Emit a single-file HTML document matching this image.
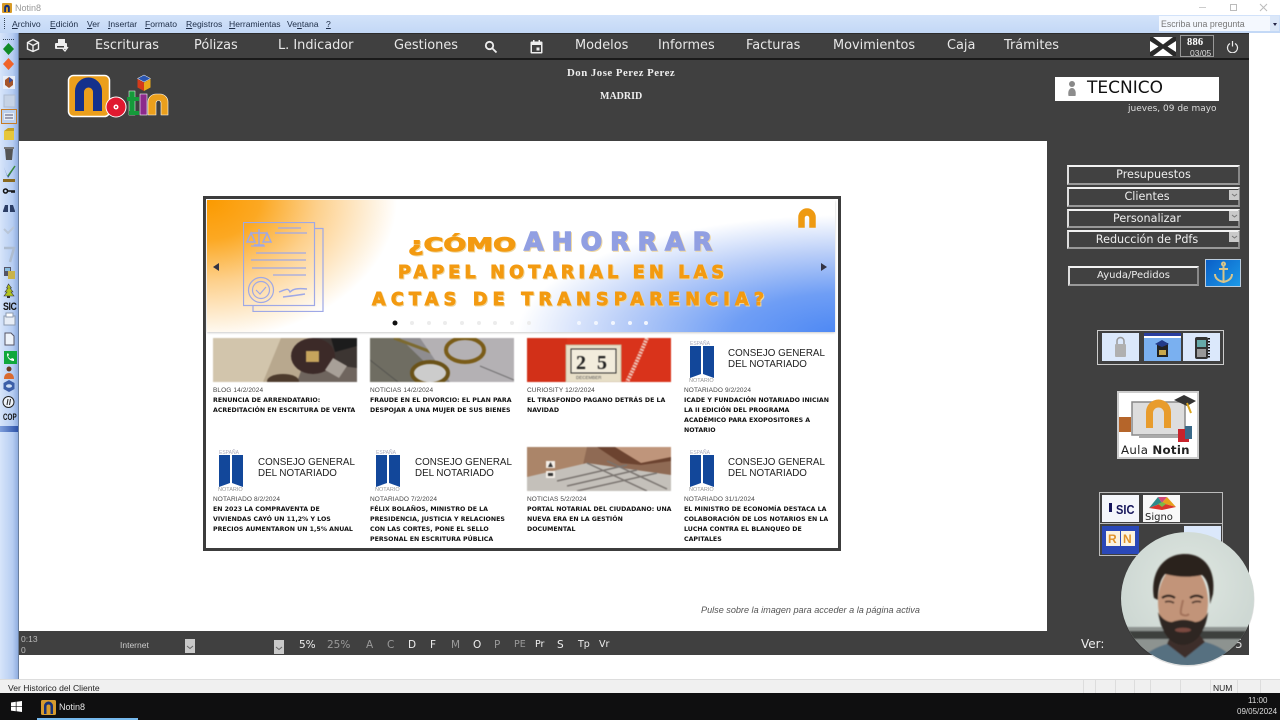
<!DOCTYPE html>
<html><head><meta charset="utf-8"><title>Notin8</title>
<style>
html,body{margin:0;padding:0;width:1280px;height:720px;overflow:hidden;background:#fff;font-family:"DejaVu Sans","Liberation Sans",sans-serif}
.a{position:absolute}
.t{position:absolute;white-space:nowrap;line-height:1}
.m{font:8.6px/10px "Liberation Sans",sans-serif;color:#20304a;top:19px;position:absolute;white-space:nowrap}
.m u{text-decoration:underline}
.n{position:absolute;top:39px;font:12.9px/14px "DejaVu Sans",sans-serif;color:#e8e8e8;white-space:nowrap}
.b{position:absolute;box-sizing:border-box;background:#414141;border:2px solid;border-color:#f2f2f2 #888 #999 #ddd;color:#eee;text-align:center;font:11.2px/16px "DejaVu Sans",sans-serif}
.dd{position:absolute;width:10px;height:10px;background:#c9c9c9;left:1229px}
.f{position:absolute;top:639px;font:10.5px/12px "DejaVu Sans",sans-serif;color:#eee}
.g{color:#9a9a9a}
.card{position:absolute;width:150px;font:6.25px/10px "DejaVu Sans",sans-serif;color:#111;white-space:nowrap}
.card i{display:block;font:6.5px/10px "Liberation Sans",sans-serif;color:#444;letter-spacing:.1px}
.card b{display:block;font-weight:bold}
.tile{position:absolute;box-sizing:border-box;background:#dbe8fb}
.cg{font:9.8px/11px 'Liberation Sans',sans-serif;color:#222}
</style></head><body>
<!-- title bar -->
<div class="a" style="left:0;top:0;width:1280px;height:15px;background:#fff"></div>
<svg class="a" style="left:2px;top:3px" width="10" height="10"><rect width="10" height="10" rx="1" fill="#d79a26"/><path d="M2.2 9V4.5a2.8 2.8 0 0 1 5.6 0V9H6V5a1 1 0 0 0-2 0v4z" fill="#14307a"/></svg>
<div class="t" style="left:15px;top:3px;font:9px 'Liberation Sans',sans-serif;color:#999">Notin8</div>
<div class="a" style="left:1199px;top:7px;width:7px;height:1px;background:#ccc"></div>
<div class="a" style="left:1230px;top:4px;width:5px;height:5px;border:1px solid #bbb"></div>
<svg class="a" style="left:1259px;top:3px" width="9" height="9"><path d="M1 1l7 7M8 1l-7 7" stroke="#bbb" fill="none"/></svg>
<!-- menu bar -->
<div class="a" style="left:0;top:15px;width:1280px;height:18px;background:linear-gradient(#d3e3fa,#c3d8f6)"></div>
<div class="a" style="left:4px;top:18px;width:1px;height:11px;border-left:1px dotted #345"></div>
<div class="m" style="left:12px"><u>A</u>rchivo</div>
<div class="m" style="left:50px"><u>E</u>dición</div>
<div class="m" style="left:87px"><u>V</u>er</div>
<div class="m" style="left:108px"><u>I</u>nsertar</div>
<div class="m" style="left:145px"><u>F</u>ormato</div>
<div class="m" style="left:186px"><u>R</u>egistros</div>
<div class="m" style="left:229px"><u>H</u>erramientas</div>
<div class="m" style="left:287px">Ve<u>n</u>tana</div>
<div class="m" style="left:326px"><u>?</u></div>
<div class="a" style="left:1159px;top:16px;width:111px;height:15px;background:#f4f8fe"></div>
<div class="t" style="left:1161px;top:19px;font:8.8px 'Liberation Sans',sans-serif;color:#777">Escriba una pregunta</div>
<div class="a" style="left:1270px;top:16px;width:9px;height:15px;background:#dbe7f8"></div>
<div class="a" style="left:1273px;top:23px;border:2px solid transparent;border-top:3px solid #224"></div>
<!-- left toolbar -->
<div class="a" style="left:0;top:33px;width:18px;height:646px;background:linear-gradient(90deg,#d7e5fa,#b6cdf2 70%,#91aee0)"></div>
<div class="a" style="left:18px;top:33px;width:1px;height:646px;background:#6a7f9f"></div>
<svg class="a" style="left:0;top:33px" width="18" height="402">
<path d="M3 6.500h12" stroke="#345" stroke-dasharray="1 1"/>
<path d="M8.500 10l5.500 6-5.500 6-5.500-6z" fill="#0f8a26"/>
<path d="M8.500 25l5.500 6-5.500 6-5.500-6z" fill="#f0632a"/>
<rect x="3" y="43" width="12" height="13" fill="#e8eef8"/><path d="M5 47l4-3 4 3v5l-4 3-4-3z" fill="#a5552a"/><path d="M9 44l4 3-4 3z" fill="#3a4f9a"/>
<rect x="4" y="62" width="11" height="12" fill="#c6d3e6" stroke="#aebbd0"/>
<rect x="1.500" y="76.500" width="15" height="14" fill="#bcd0ee" stroke="#c57c28"/><rect x="4" y="80" width="10" height="7" fill="#e6edf6"/><path d="M5 82h8M5 85h8" stroke="#557"/>
<path d="M4 98h10v9H4z" fill="#e6c63a"/><path d="M4 98l4-3h6v3z" fill="#c4a020"/>
<path d="M5 116h8l-1 11H6z" fill="#555"/><path d="M4 114h10v2H4z" fill="#777"/>
<path d="M3 146h12v3H3z" fill="#8a6a20"/><path d="M4 134l3 9 8-9-7 11z" fill="#2a4e9a"/><path d="M8 143l7-10" stroke="#3a8a3a" stroke-width="1.500"/>
<circle cx="5.500" cy="158" r="2" fill="none" stroke="#111" stroke-width="1.500"/><path d="M7 158h8M12 158v2M14 158v2" stroke="#111" stroke-width="1.500"/>
<path d="M3 178l2-6h3v7H3zM10 172h3l2 6v1h-5z" fill="#2c3e66"/>
<path d="M4 196l4 4 6-6" stroke="#b9c6d8" fill="none" stroke-width="2"/>
<path d="M4 215h10l-4 14" stroke="#aebccf" fill="none" stroke-width="2.500"/>
<rect x="4" y="234" width="7" height="9" fill="#556"/><rect x="8" y="238" width="7" height="8" fill="#c9b34a"/><rect x="5" y="235" width="5" height="3" fill="#8bd"/>
<path d="M8.500 251l3 4h-1.500l3 4h-2l3 4H4l3-4H5l3-4H6.500z" fill="#b3c41e" stroke="#334" stroke-width=".6"/><path d="M7 263h3v2H7z" fill="#333"/>
<rect x="4" y="283" width="11" height="9" fill="#e7edf6" stroke="#8d9bb0"/><rect x="6" y="280" width="7" height="4" fill="#fff" stroke="#8d9bb0"/>
<path d="M5 300h6l3 3v9H5z" fill="#eef3fa" stroke="#556"/>
<rect x="4" y="318" width="13" height="13" fill="#10a83c"/><path d="M7 321c0 4 3 7 7 7l0-2-2-1-1 1c-1 0-3-2-3-3l1-1-1-2z" fill="#fff"/>
<circle cx="9" cy="336" r="2.500" fill="#6a3a20"/><path d="M4 346c0-4 2-6 5-6s5 2 5 6z" fill="#d96a30"/>
<path d="M9 347l5.500 3v6L9 359l-5.500-3v-6z" fill="#3d5fa8"/><ellipse cx="9" cy="353" rx="3" ry="1.800" fill="#cfe0f5"/>
<circle cx="8.500" cy="369" r="5.500" fill="#eef3fa" stroke="#222"/><path d="M8 366l-1 6M10.500 366l-1 6" stroke="#222"/>
</svg>
<div class="t" style="left:3px;top:301px;font:bold 11px 'Liberation Sans',sans-serif;color:#111;letter-spacing:-.5px;transform:scaleX(.8);transform-origin:left">SIC</div>
<div class="t" style="left:3px;top:412px;font:bold 9px 'Liberation Sans',sans-serif;color:#111;transform:scaleX(.7);transform-origin:left">COP</div>
<div class="a" style="left:0;top:426px;width:18px;height:6px;background:linear-gradient(90deg,#7f9fdc,#2c52a8)"></div>
<!-- dark panels -->
<div class="a" style="left:19px;top:33px;width:1230px;height:108px;background:#404040"></div>
<div class="a" style="left:19px;top:33px;width:1230px;height:1px;background:#2c2c2c"></div>
<div class="a" style="left:19px;top:58px;width:1230px;height:2px;background:#1a1a1a"></div>
<div class="a" style="left:1047px;top:141px;width:202px;height:514px;background:#404040"></div>
<div class="a" style="left:19px;top:631px;width:1230px;height:24px;background:#404040"></div>
<!-- nav -->
<svg class="a" style="left:26px;top:38px" width="14" height="15" fill="none" stroke="#eee" stroke-width="1.400"><path d="M7 1.500l5.500 3v6.500L7 13.500 1.500 11V4.500zM1.500 4.500L7 7.500l5.500-3M7 7.500v6"/></svg>
<svg class="a" style="left:55px;top:39px" width="14" height="13"><rect x="3" y="0" width="7" height="4" fill="#eee"/><rect x="0" y="4" width="12" height="6" rx="1" fill="#eee"/><rect x="2" y="7" width="7" height="1.500" fill="#404040"/><path d="M8 10l2 2 3-4" stroke="#eee" fill="none" stroke-width="1.300"/></svg>
<div class="n" style="left:95px">Escrituras</div>
<div class="n" style="left:194px">Pólizas</div>
<div class="n" style="left:278px">L. Indicador</div>
<div class="n" style="left:394px">Gestiones</div>
<svg class="a" style="left:484px;top:40px" width="14" height="14" fill="none" stroke="#eee" stroke-width="1.800"><circle cx="5.500" cy="5.500" r="3.700"/><path d="M8.500 8.500l4 4"/></svg>
<svg class="a" style="left:530px;top:40px" width="13" height="14"><rect x="0.500" y="1.500" width="12" height="12" rx="1" fill="#eee"/><rect x="2" y="5" width="9" height="7" fill="#404040"/><rect x="3" y="0" width="1.500" height="3" fill="#eee"/><rect x="8.500" y="0" width="1.500" height="3" fill="#eee"/><rect x="6.500" y="7.500" width="3" height="3" fill="#eee"/></svg>
<div class="n" style="left:575px">Modelos</div>
<div class="n" style="left:658px">Informes</div>
<div class="n" style="left:746px">Facturas</div>
<div class="n" style="left:833px">Movimientos</div>
<div class="n" style="left:947px">Caja</div>
<div class="n" style="left:1004px">Trámites</div>
<svg class="a" style="left:1150px;top:37px" width="26" height="19"><rect width="26" height="19" fill="#2a2a2a"/><path d="M3 0h20L13 7.500zM3 19h20L13 11.500zM0 4l8.500 5.500L0 15zM26 4l-8.500 5.500L26 15z" fill="#fff"/></svg>
<div class="a" style="left:1180px;top:35px;width:34px;height:22px;box-sizing:border-box;border:1px solid #999;background:#3a3a3a"></div>
<div class="t" style="left:1187px;top:37px;font:bold 10.500px 'Liberation Serif',serif;color:#fff;letter-spacing:.2px">886</div>
<div class="t" style="left:1190px;top:48px;font:8.500px 'Liberation Sans',sans-serif;color:#ddd">03/05</div>
<svg class="a" style="left:1226px;top:40px" width="13" height="13" fill="none" stroke="#eee" stroke-width="1.200"><path d="M4 3.500a5 5 0 1 0 5 0M6.500 1v5.500"/></svg>
<!-- logo -->
<svg class="a" style="left:67px;top:74px" width="104" height="44">
<rect x="1.500" y="1.500" width="41" height="41" rx="5" fill="#eb9f1c" stroke="#fff" stroke-width="1.500"/>
<path d="M8 37V17a13.500 13.500 0 0 1 27 0v20h-9V18a4.500 4.500 0 0 0-9 0v19z" fill="#14318c"/>
<circle cx="49" cy="33" r="10" fill="#e0182f" stroke="#fff"/><circle cx="49" cy="33" r="2.500" fill="#fff"/><circle cx="49" cy="33" r="1" fill="#e0182f"/>
<rect x="62" y="17" width="6" height="24" fill="#159a3a" stroke="#fff" stroke-width=".5"/><rect x="60" y="23" width="12" height="4" fill="#159a3a"/><path d="M62 37h10v4H62z" fill="#159a3a"/>
<rect x="73" y="20" width="7" height="21" fill="#8c2a8c" stroke="#fff" stroke-width=".6"/>
<path d="M81 41V28a8 8 0 0 1 8-8h4a8 8 0 0 1 8 8v13h-7V29a2.500 2.500 0 0 0-5 0v12z" fill="#eb9f1c" stroke="#fff" stroke-width=".6"/>
<path d="M77 1l6.500 3.500L77 8l-6.500-3.500z" fill="#2a55b0" stroke="#fff" stroke-width=".5"/><path d="M70.500 5L77 8.500V17l-6.500-3.500z" fill="#d43a1a"/><path d="M83.500 5L77 8.500V17l6.500-3.500z" fill="#e8a81a"/>
</svg>
<div class="t" style="left:567px;top:67px;font:bold 10.800px 'Liberation Serif',serif;color:#eee;letter-spacing:.5px">Don Jose Perez Perez</div>
<div class="t" style="left:600px;top:91px;font:bold 10px 'Liberation Serif',serif;color:#eee">MADRID</div>
<div class="a" style="left:1055px;top:77px;width:164px;height:24px;background:#fff"></div>
<svg class="a" style="left:1066px;top:80px" width="12" height="17"><circle cx="6" cy="4" r="3" fill="#888"/><path d="M2.500 16c-1-5 1-8 3.500-8s4.500 3 3.500 8z" fill="#8d8d8d"/></svg>
<div class="t" style="left:1087px;top:80px;font-size:17px;color:#111">TECNICO</div>
<div class="t" style="left:1128px;top:105px;font-size:9px;color:#ddd">jueves, 09 de mayo</div>
<!-- right panel -->
<div class="b" style="left:1067px;top:165px;width:173px;height:20px">Presupuestos</div>
<div class="b" style="left:1067px;top:187px;width:173px;height:20px;padding-right:13px">Clientes</div>
<div class="b" style="left:1067px;top:209px;width:173px;height:19px;padding-right:13px;line-height:15px">Personalizar</div>
<div class="b" style="left:1067px;top:230px;width:173px;height:19px;padding-right:13px;line-height:15px">Reducción de Pdfs</div>
<div class="dd" style="top:190px"></div><div class="dd" style="top:211px"></div><div class="dd" style="top:232px"></div>
<svg class="a" style="left:1230px;top:190px" width="9" height="52" fill="none" stroke="#777"><path d="M2 4l2.500 2L7 4M2 25l2.500 2L7 25M2 46l2.500 2L7 46"/></svg>
<div class="b" style="left:1068px;top:266px;width:131px;height:20px;font-size:10px;line-height:15px">Ayuda/Pedidos</div>
<div class="a" style="left:1205px;top:259px;width:36px;height:28px;box-sizing:border-box;border:1px solid #bcd;background:linear-gradient(135deg,#0a5fc8,#1c9ae8)"></div>
<svg class="a" style="left:1213px;top:261px" width="21" height="24" fill="none" stroke="#d8c58a" stroke-width="2"><circle cx="10.500" cy="3" r="1.500"/><path d="M10.500 5v15M6 8h9M2 13c0 5 4 7 8.500 8 4.500-1 8.500-3 8.500-8"/></svg>
<div class="a" style="left:1097px;top:330px;width:127px;height:35px;box-sizing:border-box;border:1px solid #ccc"></div>
<div class="tile" style="left:1102px;top:333px;width:37px;height:28px"></div>
<svg class="a" style="left:1114px;top:336px" width="13" height="22"><path d="M3 8V5a3.500 3.500 0 0 1 7 0v3" fill="none" stroke="#999" stroke-width="1.500"/><rect x="1" y="8" width="11" height="13" rx="1" fill="#b0b0b0"/></svg>
<div class="tile" style="left:1144px;top:333px;width:37px;height:28px;background:linear-gradient(#2a3fa0 0 3px,#fff 3px 5px,#7ab0f0 5px)"></div>
<svg class="a" style="left:1152px;top:339px" width="20" height="20"><rect x="5" y="4" width="11" height="14" fill="#222"/><path d="M3 5l7-4 7 4-7 3z" fill="#223a88"/><rect x="7" y="11" width="7" height="5" fill="#c9a74a"/></svg>
<div class="tile" style="left:1183px;top:333px;width:37px;height:28px"></div>
<svg class="a" style="left:1193px;top:334px" width="18" height="26"><rect x="2" y="3" width="13" height="22" rx="2" fill="#333"/><rect x="4" y="6" width="9" height="7" fill="#6aa"/><rect x="4" y="15" width="9" height="8" fill="#999"/><path d="M16 4v20" stroke="#111" stroke-dasharray="1.500 1.500" stroke-width="2"/></svg>
<div class="a" style="left:1117px;top:391px;width:82px;height:68px;box-sizing:border-box;border:2px solid #ccc;background:#fff"></div>
<svg class="a" style="left:1119px;top:393px" width="78" height="64">
<rect x="13" y="9" width="53" height="33" fill="#ddd" stroke="#888" stroke-width="1.500"/><rect x="20" y="42" width="40" height="3" fill="#aaa"/>
<path d="M27 35V19a12 12 0 0 1 25 0v16h-7V20a5 5 0 0 0-11 0v15z" fill="#e89c2c"/>
<rect x="0" y="24" width="12" height="15" fill="#b5652a"/>
<rect x="59" y="36" width="11" height="13" fill="#c8232c"/><rect x="66" y="33" width="7" height="13" fill="#3a6a8a"/>
<path d="M55 7l10-5 12 6-9 5z" fill="#333"/><path d="M68 10l4 10" stroke="#d9a520" stroke-width="2"/>
</svg>
<div class="t" style="left:1121px;top:443px;font:11.800px 'DejaVu Sans',sans-serif;color:#222;letter-spacing:.3px">Aula <b>Notin</b></div>
<div class="a" style="left:1099px;top:492px;width:124px;height:64px;box-sizing:border-box;border:1px solid #bbb"></div>
<div class="a" style="left:1099px;top:523px;width:124px;height:1px;background:#bbb"></div>
<div class="tile" style="left:1102px;top:495px;width:37px;height:27px;background:#f4f6fb"></div>
<div class="t" style="left:1116px;top:502px;font:bold 13px 'Liberation Sans',sans-serif;color:#14145a;transform:scaleX(.85);transform-origin:left">SIC</div>
<div class="a" style="left:1109px;top:503px;width:3px;height:9px;background:#14145a"></div>
<div class="tile" style="left:1143px;top:495px;width:37px;height:27px;background:#f8f8f8"></div>
<svg class="a" style="left:1145px;top:496px" width="33" height="17"><path d="M4 12L13 1l4 6z" fill="#2f8a8a"/><path d="M13 1h9l-5 6z" fill="#d04a7a"/><path d="M22 1l9 10-14-4z" fill="#e6a01c"/><path d="M4 12l13-5 14 4-14 3z" fill="#d9342c"/><path d="M13 8l4-2 4 2-4 3z" fill="#7ab84a"/></svg>
<div class="t" style="left:1145px;top:512px;font:10px 'DejaVu Sans',sans-serif;color:#222">Signo</div>
<div class="tile" style="left:1102px;top:526px;width:37px;height:28px;background:#2a48b8"></div>
<div class="a" style="left:1106px;top:531px;width:14px;height:15px;background:#fbf3e0"></div>
<div class="a" style="left:1121px;top:531px;width:14px;height:15px;background:#fbf3e0"></div>
<div class="t" style="left:1108px;top:532px;font:bold 12px 'Liberation Sans',sans-serif;color:#e0932a">R</div>
<div class="t" style="left:1123px;top:532px;font:bold 12px 'Liberation Sans',sans-serif;color:#e0932a">N</div>
<div class="tile" style="left:1184px;top:526px;width:37px;height:28px"></div>
<!-- card -->
<div class="a" style="left:203px;top:196px;width:638px;height:355px;box-sizing:border-box;border:3px solid #3c3c3c;background:#fff"></div>
<div class="a" style="left:207px;top:200px;width:628px;height:132px;background:#fff;overflow:hidden;box-shadow:0 1px 2px #ccc">
<div class="a" style="left:0;top:0;width:628px;height:132px;background:radial-gradient(ellipse 190px 140px at 0 0,#fb9a00 0,#fca822 28%,#fdd08c 58%,rgba(255,255,255,0) 100%)"></div>
<div class="a" style="left:0;top:0;width:628px;height:132px;background:radial-gradient(ellipse 330px 120px at 640px 135px,#4a86f4 0,#6f9ef5 35%,#b8cdf8 68%,rgba(255,255,255,0) 100%)"></div>
</div>
<svg class="a" style="left:243px;top:222px" width="82" height="90" fill="none" stroke="#9ea8e6" stroke-width="1.200">
<path d="M71 6.500h9v83H10v-6"/><rect x="0.500" y="0.500" width="71" height="83" fill="none"/>
<path d="M35 6h23M32 11h32M8 24h14M13 31h50M8 38h55M9 46h54M30 53h33" stroke-width="1.300"/>
<path d="M16 7v16M8 11h16M11 23h10M8 11l-4 9h8zM24 11l-4 9h8z" stroke-width="1.500"/>
<circle cx="18" cy="68" r="12.500"/><circle cx="18" cy="68" r="8.500"/><path d="M13 68l4 4 6-7"/>
<path d="M36 70c6-2 9-5 11 0 3-3 7-4 17-3M40 75c8-1 16-2 22-3" stroke-width="1.400"/>
</svg>
<svg class="a" style="left:207px;top:200px" width="628" height="132">
<g font-family="'DejaVu Sans',sans-serif" font-weight="bold" fill="#f39a10" stroke="#f39a10" stroke-width=".9" style="filter:drop-shadow(1.200px 1.200px 0 #efd7a0)">
<text x="201" y="51" font-size="19" textLength="108" lengthAdjust="spacingAndGlyphs">¿CÓMO</text>
<text x="317" y="50" font-size="25" textLength="188" lengthAdjust="spacing" fill="#919fe2" stroke="#919fe2" stroke-width="1.400">AHORRAR</text>
<text x="191" y="78" font-size="17.500" textLength="326" lengthAdjust="spacing">PAPEL NOTARIAL EN LAS</text>
<text x="165" y="105" font-size="17.500" textLength="392" lengthAdjust="spacing">ACTAS DE TRANSPARENCIA?</text>
</g>
<path d="M6 67l6-4v8zM614 63l6 4-6 4z" fill="#334"/>
<circle cx="188" cy="123" r="2.500" fill="#111"/>
<g fill="#ececec"><circle cx="205" cy="123" r="2"/><circle cx="222" cy="123" r="2"/><circle cx="238" cy="123" r="2"/><circle cx="255" cy="123" r="2"/><circle cx="272" cy="123" r="2"/><circle cx="288" cy="123" r="2"/><circle cx="305" cy="123" r="2"/><circle cx="322" cy="123" r="2"/></g>
<g fill="#f2f6fe"><circle cx="372" cy="123" r="2"/><circle cx="389" cy="123" r="2"/><circle cx="406" cy="123" r="2"/><circle cx="423" cy="123" r="2"/><circle cx="439" cy="123" r="2"/></g>
<path d="M592 27V17a8 8 0 0 1 16 0v10h-5V18a3 3 0 0 0-6 0v9z" fill="#ee9a12" stroke="#ee9a12" stroke-width="1.500"/>
</svg>
<!-- thumbnails -->
<svg class="a" style="left:213px;top:338px;filter:blur(.5px)" width="144" height="44"><rect width="144" height="44" fill="#b8a88e"/><path d="M0 0h68L50 44H0z" fill="#d2c5ac"/><path d="M84 44L100 0h44v44z" fill="#6f655e"/><path d="M100 0h44v30l-30-4z" fill="#3c3532"/><ellipse cx="100" cy="18" rx="22" ry="18" fill="#3c2a28"/><rect x="93" y="13" width="13" height="11" fill="#c6a45c"/><path d="M118 0h26v8l-22 6z" fill="#1c1c1c"/><ellipse cx="70" cy="43" rx="16" ry="7" fill="#4c3a2c"/><path d="M120 20l14 8-8 12-14-8z" fill="#a8a098"/></svg>
<svg class="a" style="left:370px;top:338px;filter:blur(.5px)" width="144" height="44"><rect width="144" height="44" fill="#8f8d90"/><path d="M0 0h30l45 44H0z" fill="#6f6d62"/><path d="M24 0c20 8 40 14 60 24" stroke="#7c6a30" stroke-width="3" fill="none"/><path d="M50 0h94v44H80z" fill="#b4b1b4"/><ellipse cx="95" cy="12" rx="19" ry="12" fill="none" stroke="#7a5c18" stroke-width="4"/><ellipse cx="60" cy="35" rx="18" ry="11" fill="#ccc" stroke="#6a5218" stroke-width="4"/><path d="M110 28l34 14M0 22l28 22" stroke="#444" opacity=".6"/></svg>
<svg class="a" style="left:527px;top:338px;filter:blur(.4px)" width="144" height="44"><rect width="144" height="44" fill="#d9331b"/><rect x="0" y="0" width="40" height="44" fill="#d23018"/><rect x="39" y="7" width="55" height="37" fill="#e8dfc8" stroke="#c9b89a"/><rect x="44" y="11" width="45" height="24" fill="#f2ecdc" stroke="#333"/><text x="49" y="31" font-family="'Liberation Serif',serif" font-weight="bold" font-size="20" fill="#222">2</text><text x="70" y="31" font-family="'Liberation Serif',serif" font-weight="bold" font-size="20" fill="#222">5</text><text x="49" y="41" font-size="4.500" fill="#555" font-family="'Liberation Sans',sans-serif">DECEMBER</text><path d="M120 0c-6 14-12 28-20 44" stroke="#eec4b8" stroke-width="4" stroke-dasharray="2 1" fill="none"/></svg>
<svg class="a" style="left:527px;top:447px;filter:blur(.5px)" width="144" height="44"><rect width="144" height="44" fill="#8f6a54"/><path d="M0 0h60l-10 44H0z" fill="#ab8569"/><path d="M0 30l60-14 84 12v16H0z" fill="#c4c0ba"/><path d="M30 34l70-16M40 39l70-16M50 44l80-18M60 16l60 28M80 14l60 28" stroke="#7a7470" stroke-width="1.500"/><path d="M70 0h74v14l-30 4-20-2z" fill="#6c4330"/><path d="M88 0h56v10l-30 6z" fill="#bf957b"/><rect x="19" y="14" width="9" height="7" fill="#f4efe8"/><rect x="19" y="24" width="9" height="7" fill="#f4efe8"/><path d="M21 20l2.500-5 2.500 5zM21 29v-3h5v3z" fill="#333"/></svg>
<!-- CGN logos -->
<svg class="a" style="left:684px;top:338px" width="40" height="46"><text x="6" y="7" font-size="5" fill="#aab" font-family="'Liberation Sans',sans-serif">ESPAÑA</text><path d="M6 8h11v28L6 40zM19 8h11v32L19 36z" fill="#12479a"/><text x="5" y="44" font-size="5.500" fill="#999" font-family="'Liberation Sans',sans-serif">NOTARIO</text></svg>
<div class="t cg" style="left:728px;top:348px">CONSEJO GENERAL<br>DEL NOTARIADO</div>
<svg class="a" style="left:213px;top:447px" width="40" height="46"><text x="6" y="7" font-size="5" fill="#aab" font-family="'Liberation Sans',sans-serif">ESPAÑA</text><path d="M6 8h11v28L6 40zM19 8h11v32L19 36z" fill="#12479a"/><text x="5" y="44" font-size="5.500" fill="#999" font-family="'Liberation Sans',sans-serif">NOTARIO</text></svg>
<div class="t cg" style="left:258px;top:457px">CONSEJO GENERAL<br>DEL NOTARIADO</div>
<svg class="a" style="left:370px;top:447px" width="40" height="46"><text x="6" y="7" font-size="5" fill="#aab" font-family="'Liberation Sans',sans-serif">ESPAÑA</text><path d="M6 8h11v28L6 40zM19 8h11v32L19 36z" fill="#12479a"/><text x="5" y="44" font-size="5.500" fill="#999" font-family="'Liberation Sans',sans-serif">NOTARIO</text></svg>
<div class="t cg" style="left:415px;top:457px">CONSEJO GENERAL<br>DEL NOTARIADO</div>
<svg class="a" style="left:684px;top:447px" width="40" height="46"><text x="6" y="7" font-size="5" fill="#aab" font-family="'Liberation Sans',sans-serif">ESPAÑA</text><path d="M6 8h11v28L6 40zM19 8h11v32L19 36z" fill="#12479a"/><text x="5" y="44" font-size="5.500" fill="#999" font-family="'Liberation Sans',sans-serif">NOTARIO</text></svg>
<div class="t cg" style="left:728px;top:457px">CONSEJO GENERAL<br>DEL NOTARIADO</div>
<!-- card text -->
<div class="card" style="left:213px;top:386px"><i>BLOG 14/2/2024</i><b>RENUNCIA DE ARRENDATARIO:<br>ACREDITACIÓN EN ESCRITURA DE VENTA</b></div>
<div class="card" style="left:370px;top:386px"><i>NOTICIAS 14/2/2024</i><b>FRAUDE EN EL DIVORCIO: EL PLAN PARA<br>DESPOJAR A UNA MUJER DE SUS BIENES</b></div>
<div class="card" style="left:527px;top:386px"><i>CURIOSITY 12/2/2024</i><b>EL TRASFONDO PAGANO DETRÁS DE LA<br>NAVIDAD</b></div>
<div class="card" style="left:684px;top:386px"><i>NOTARIADO 9/2/2024</i><b>ICADE Y FUNDACIÓN NOTARIADO INICIAN<br>LA II EDICIÓN DEL PROGRAMA<br>ACADÉMICO PARA EXOPOSITORES A<br>NOTARIO</b></div>
<div class="card" style="left:213px;top:495px"><i>NOTARIADO 8/2/2024</i><b>EN 2023 LA COMPRAVENTA DE<br>VIVIENDAS CAYÓ UN 11,2% Y LOS<br>PRECIOS AUMENTARON UN 1,5% ANUAL</b></div>
<div class="card" style="left:370px;top:495px"><i>NOTARIADO 7/2/2024</i><b>FÉLIX BOLAÑOS, MINISTRO DE LA<br>PRESIDENCIA, JUSTICIA Y RELACIONES<br>CON LAS CORTES, PONE EL SELLO<br>PERSONAL EN ESCRITURA PÚBLICA</b></div>
<div class="card" style="left:527px;top:495px"><i>NOTICIAS 5/2/2024</i><b>PORTAL NOTARIAL DEL CIUDADANO: UNA<br>NUEVA ERA EN LA GESTIÓN<br>DOCUMENTAL</b></div>
<div class="card" style="left:684px;top:495px"><i>NOTARIADO 31/1/2024</i><b>EL MINISTRO DE ECONOMÍA DESTACA LA<br>COLABORACIÓN DE LOS NOTARIOS EN LA<br>LUCHA CONTRA EL BLANQUEO DE<br>CAPITALES</b></div>
<div class="t" style="left:701px;top:605px;font:italic 9.100px 'Liberation Sans',sans-serif;color:#555">Pulse sobre la imagen para acceder a la página activa</div>
<!-- bottom bar -->
<div class="t" style="left:21px;top:634px;font:8.500px/11px 'Liberation Sans',sans-serif;color:#bbb">0:13<br>0</div>
<div class="t" style="left:120px;top:640px;font:8.500px 'Liberation Sans',sans-serif;color:#ccc">Internet</div>
<div class="a" style="left:185px;top:639px;width:10px;height:14px;background:#c9c9c9"></div>
<div class="a" style="left:274px;top:640px;width:10px;height:14px;background:#c9c9c9"></div>
<svg class="a" style="left:185px;top:639px" width="100" height="15" fill="none" stroke="#666"><path d="M2 7l3 2.500L8 7M91 8l3 2.500L97 8"/></svg>
<div class="f" style="left:299px">5%</div><div class="f g" style="left:327px">25%</div>
<div class="f g" style="left:366px">A</div><div class="f g" style="left:387px">C</div>
<div class="f" style="left:408px">D</div><div class="f" style="left:430px">F</div>
<div class="f g" style="left:451px">M</div><div class="f" style="left:473px">O</div>
<div class="f g" style="left:494px">P</div><div class="f g" style="left:514px;font-size:9.500px">PE</div>
<div class="f" style="left:535px;font-size:9.500px">Pr</div><div class="f" style="left:557px">S</div>
<div class="f" style="left:578px;font-size:9.500px">Tp</div><div class="f" style="left:599px;font-size:9.500px">Vr</div>
<div class="t" style="left:1081px;top:638px;font-size:12px;color:#eee">Ver:</div>
<div class="t" style="left:1235px;top:638px;font-size:12px;color:#ddd">5</div>
<!-- status -->
<div class="a" style="left:0;top:679px;width:1280px;height:14px;background:#f0f0f0;border-top:1px solid #ddd;box-sizing:border-box"></div>
<div class="t" style="left:8px;top:683px;font:8.600px 'Liberation Sans',sans-serif;color:#222">Ver Historico del Cliente</div>
<div class="a" style="left:1083px;top:680px;width:1px;height:13px;background:#ddd;box-shadow:12px 0 #ddd,32px 0 #ddd,51px 0 #ddd,67px 0 #ddd,97px 0 #ddd,127px 0 #ddd,154px 0 #ddd,177px 0 #ddd"></div>
<div class="t" style="left:1213px;top:683px;font:8.500px 'Liberation Sans',sans-serif;color:#222">NUM</div>
<!-- taskbar -->
<div class="a" style="left:0;top:693px;width:1280px;height:27px;background:#0f0f10"></div>
<div class="a" style="left:37px;top:718px;width:101px;height:2px;background:#76b9ed"></div>
<svg class="a" style="left:11px;top:701px" width="11" height="11" fill="#fff"><path d="M0 1.500l4.800-.7v4.400H0zM5.500.7L11 0v5.200H5.500zM0 5.900h4.800v4.400L0 9.600zM5.500 5.900H11V11l-5.500-.7z"/></svg>
<svg class="a" style="left:41px;top:700px" width="15" height="15"><rect width="15" height="15" rx="1.500" fill="#d59a2e"/><path d="M3 14V6a4.500 4.500 0 0 1 9 0v8H9.500V6.500a2 2 0 0 0-4 0V14z" fill="#14307a"/></svg>
<div class="t" style="left:59px;top:702px;font:9px 'Liberation Sans',sans-serif;color:#e8e8e8">Notin8</div>
<div class="t" style="left:1248px;top:696px;font:8px 'Liberation Sans',sans-serif;color:#ddd">11:00</div>
<div class="t" style="left:1237px;top:707px;font:8px 'Liberation Sans',sans-serif;color:#ddd">09/05/2024</div>
<!-- webcam -->
<svg class="a" style="left:1117px;top:528px" width="142" height="142">
<defs><clipPath id="c"><circle cx="70.500" cy="70.500" r="66.500"/></clipPath>
<radialGradient id="bg" cx=".5" cy=".4" r=".7"><stop offset="0" stop-color="#dfe7e1"/><stop offset="1" stop-color="#c6d1cd"/></radialGradient>
<filter id="bl"><feGaussianBlur stdDeviation=".8"/></filter></defs>
<circle cx="70.500" cy="71.500" r="67" fill="#000" opacity=".12"/>
<g clip-path="url(#c)"><rect width="142" height="142" fill="url(#bg)"/>
<g filter="url(#bl)">
<rect x="0" y="99" width="142" height="43" fill="#8d9390"/>
<rect x="0" y="103" width="142" height="8" fill="#3c3f3e"/>
<path d="M18 142c4-14 18-22 32-26l18 14 20-16c16 4 30 14 36 28z" fill="#566f80"/>
<path d="M50 116l18 14 20-16-6-8H54z" fill="#3d2f29"/>
<ellipse cx="66" cy="74" rx="25" ry="38" fill="#c29479"/>
<path d="M37 70c-4-24 8-44 31-44 20 0 31 16 28 40l-3 10c0-14-2-24-8-29-13 3-26 2-37-1-5 6-7 14-7 26z" fill="#2a211d"/>
<path d="M41 84c3 19 11 33 25 33s23-15 25-33c-4 8-9 10-13 10-8-3-15-3-23 0-5 0-10-3-14-10z" fill="#2f2520"/>
<ellipse cx="66" cy="102" rx="8" ry="2.300" fill="#7a4a40"/>
<path d="M45 70c4-3 9-3 13 0M73 70c4-3 9-3 13 0" stroke="#1f1815" stroke-width="2.300" fill="none"/>
<path d="M48 74c3-1 6-1 9 1M75 75c3-2 6-2 9-1" stroke="#4a352c" stroke-width="1.800" fill="none"/>
<path d="M66 72c-1 6-3 10-2 14 3 2 6 2 8 0" stroke="#a07058" stroke-width="2" fill="none"/>
</g></g></svg>
</body></html>
